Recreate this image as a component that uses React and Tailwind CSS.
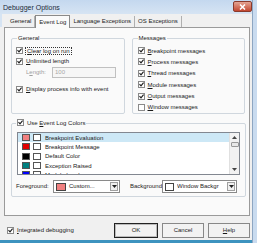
import React from "react";

const Check = ({ checked = true, className = "" }) => (
  <span className={"inline-flex w-[7px] h-[7px] shrink-0 items-center justify-center border border-[#8a8a8a] bg-white " + className}>
    {checked && (
      <svg width="5" height="5" viewBox="0 0 5 5">
        <path d="M0.5 2.2 L2 3.8 L4.6 0.6" stroke="#1a1a1a" strokeWidth="1.1" fill="none" />
      </svg>
    )}
  </span>
);

const U = ({ c }) => <span className="underline underline-offset-[1px]">{c}</span>;

const Row = ({ checked = true, children, className = "" }) => (
  <div className={"flex items-center gap-[3px] h-[9px] " + className}>
    <Check checked={checked} />
    <span className="whitespace-nowrap leading-none">{children}</span>
  </div>
);

const Arrow = () => (
  <span className="flex w-[8px] h-[9px] shrink-0 items-center justify-center border border-[#a0a0a0] bg-[#f0f0f0]">
    <svg width="5" height="3" viewBox="0 0 5 3"><path d="M0 0 H5 L2.5 3 Z" fill="#222" /></svg>
  </span>
);

export default function App() {
  const items = [
    ["#f08080", "Breakpoint Evaluation", true],
    ["#e00000", "Breakpoint Message"],
    ["#000000", "Default Color"],
    ["#008080", "Exception Raised"],
    ["#0000ff", "Module Load"],
  ];
  return (
    <div className="w-[257px] h-[243px] overflow-hidden flex bg-[#f0f0f0] text-[6px] text-[#1a1a1a] font-['Liberation_Sans',Arial,sans-serif]">
      <div className="w-[252px] flex flex-col">
        {/* title bar */}
        <div className="h-[14px] shrink-0 flex items-center justify-between pl-[3px] bg-gradient-to-b from-[#c4d8ef] to-[#d6e4f3]">
          <span className="text-[7px] text-[#1b2a3a] leading-none">Debugger Options</span>
          <span className="w-[19px] h-[11px] mt-[-1px] rounded-[2px] border border-[#8a3a2c] bg-gradient-to-b from-[#e3a493] to-[#c2452f] flex items-center justify-center">
            <svg width="7" height="6" viewBox="0 0 7 6"><path d="M1 0.5 L6 5.5 M6 0.5 L1 5.5" stroke="white" strokeWidth="1.5" /></svg>
          </span>
        </div>
        {/* tabs */}
        <div className="h-[13px] shrink-0 flex items-end pl-[5px] border-l-[2px] border-[#d6e4f3]">
          <div className="h-[11px] px-[3px] flex items-center border-r border-[#b0b0b0]">General</div>
          <div className="h-[13px] px-[3px] flex items-center border-x border-t border-[#8a8a8a] bg-[#fafafa] -mb-[1px] relative">Event Log</div>
          <div className="h-[11px] px-[3px] flex items-center border-r border-[#b0b0b0]">Language Exceptions</div>
          <div className="h-[11px] px-[3px] flex items-center border-r border-[#b0b0b0]">OS Exceptions</div>
        </div>
        {/* panel */}
        <div className="ml-[4px] w-[246px] h-[189px] shrink-0 border border-[#9a9a9a] bg-[#fafafa] pl-[6px] pr-[4px] pt-[10px]">
          <div className="flex gap-[7px]">
            <div className="w-[114px] h-[76px] border border-[#d0d7de] rounded-[2px] relative px-[4px]">
              <span className="absolute -top-[4px] left-[5px] px-[1px] bg-[#fafafa] leading-none">General</span>
              <div className="pt-[7px] flex flex-col">
                <Row><span className="outline outline-1 outline-dotted outline-[#333] px-[1px]"><U c="C" />lear log on run</span></Row>
                <Row className="mt-[1.5px]"><U c="U" />nlimited length</Row>
                <div className="flex items-center h-[11px] mt-[1px] pl-[10px]">
                  <span className="text-[#a0a0a0] w-[26px]">L<U c="e" />ngth:</span>
                  <span className="w-[64px] h-[11px] border border-[#c0c0c0] bg-[#f6f6f6] text-[#a8a8a8] flex items-center pl-[2px]">100</span>
                </div>
                <Row className="mt-[7px]"><U c="D" />isplay process info with event</Row>
              </div>
            </div>
            <div className="w-[114px] h-[76px] border border-[#d0d7de] rounded-[2px] relative px-[5px]">
              <span className="absolute -top-[4px] left-[5px] px-[1px] bg-[#fafafa] leading-none">Messages</span>
              <div className="pt-[7px] flex flex-col gap-[2.4px]">
                <Row><U c="B" />reakpoint messages</Row>
                <Row><U c="P" />rocess messages</Row>
                <Row><U c="T" />hread messages</Row>
                <Row><U c="M" />odule messages</Row>
                <Row><U c="O" />utput messages</Row>
                <Row checked={false}><U c="W" />indow messages</Row>
              </div>
            </div>
          </div>
          <div className="mt-[9px] w-[235px] h-[74px] border border-[#d0d7de] rounded-[2px] relative pl-[5px]">
            <div className="absolute -top-[5px] left-[4px] px-[1px] bg-[#fafafa] flex items-center gap-[3px]">
              <Check />
              <span className="leading-none">Use <U c="E" />vent Log Colors</span>
            </div>
            <div className="mt-[8px] w-[223px] h-[43px] border border-[#828790] bg-white flex overflow-hidden">
              <div className="flex-1 flex flex-col">
                {items.map(([c, t, sel]) => (
                  <div key={t} className={"h-[9.3px] shrink-0 flex items-center pl-[4px] " + (sel ? "bg-[#cde8f6]" : "")}>
                    <span className="w-[8px] h-[7px] border border-[#555]" style={{ background: c }} />
                    <span className="w-[8px] h-[7px] border border-[#555] bg-white ml-[3px]" />
                    <span className="ml-[4px] whitespace-nowrap leading-none">{t}</span>
                  </div>
                ))}
              </div>
              <div className="w-[10px] bg-[#f2f2f2] border-l border-[#e0e0e0] flex flex-col items-center">
                <svg width="5" height="3" viewBox="0 0 5 3" className="mt-[3px]"><path d="M0 3 H5 L2.5 0 Z" fill="#444" /></svg>
                <span className="mt-[3px] w-[8px] h-[5px] border border-[#999] bg-[#e8e8e8] rounded-[1px]" />
                <span className="flex-1" />
                <svg width="5" height="3" viewBox="0 0 5 3" className="mb-[3px]"><path d="M0 0 H5 L2.5 3 Z" fill="#444" /></svg>
              </div>
            </div>
            <div className="mt-[5px] flex items-center">
              <span className="w-[37px] -ml-[1px] whitespace-nowrap">Foreground:</span>
              <span className="w-[67px] h-[13px] border border-[#8a8a8a] bg-white flex items-center pl-[2px] pr-[1px]">
                <span className="w-[10px] h-[8px] border border-[#444] bg-[#f08080]" />
                <span className="ml-[3px] flex-1">Custom...</span>
                <Arrow />
              </span>
              <span className="ml-[10px] w-[32px] whitespace-nowrap">Background:</span>
              <span className="w-[75px] h-[13px] border border-[#8a8a8a] bg-white flex items-center pl-[2px] pr-[1px]">
                <span className="w-[9px] h-[8px] shrink-0 border border-[#444] bg-white" />
                <span className="ml-[3px] flex-1 overflow-hidden whitespace-nowrap">Window Backgr</span>
                <Arrow />
              </span>
            </div>
          </div>
        </div>
        {/* bottom */}
        <div className="h-[24px] shrink-0 flex items-center pl-[7px] pr-[2px] pt-[4px]">
          <Row><U c="I" />ntegrated debugging</Row>
          <span className="flex-1" />
          <div className="flex gap-[4px]">
            <span className="w-[44px] h-[15px] border border-[#222] bg-[#f2f2f2] flex items-center justify-center shadow-[inset_0_0_0_1px_#bbb]">OK</span>
            <span className="w-[42px] h-[15px] border border-[#888] bg-[#f2f2f2] flex items-center justify-center">Cancel</span>
            <span className="w-[42px] h-[15px] border border-[#888] bg-[#f2f2f2] flex items-center justify-center"><U c="H" />elp</span>
          </div>
        </div>
        <div className="flex-1 bg-[#3d93bf]" />
      </div>
      <div className="w-[5px] h-full bg-[#c9dbef] border-l border-[#8da6c2]" />
    </div>
  );
}
